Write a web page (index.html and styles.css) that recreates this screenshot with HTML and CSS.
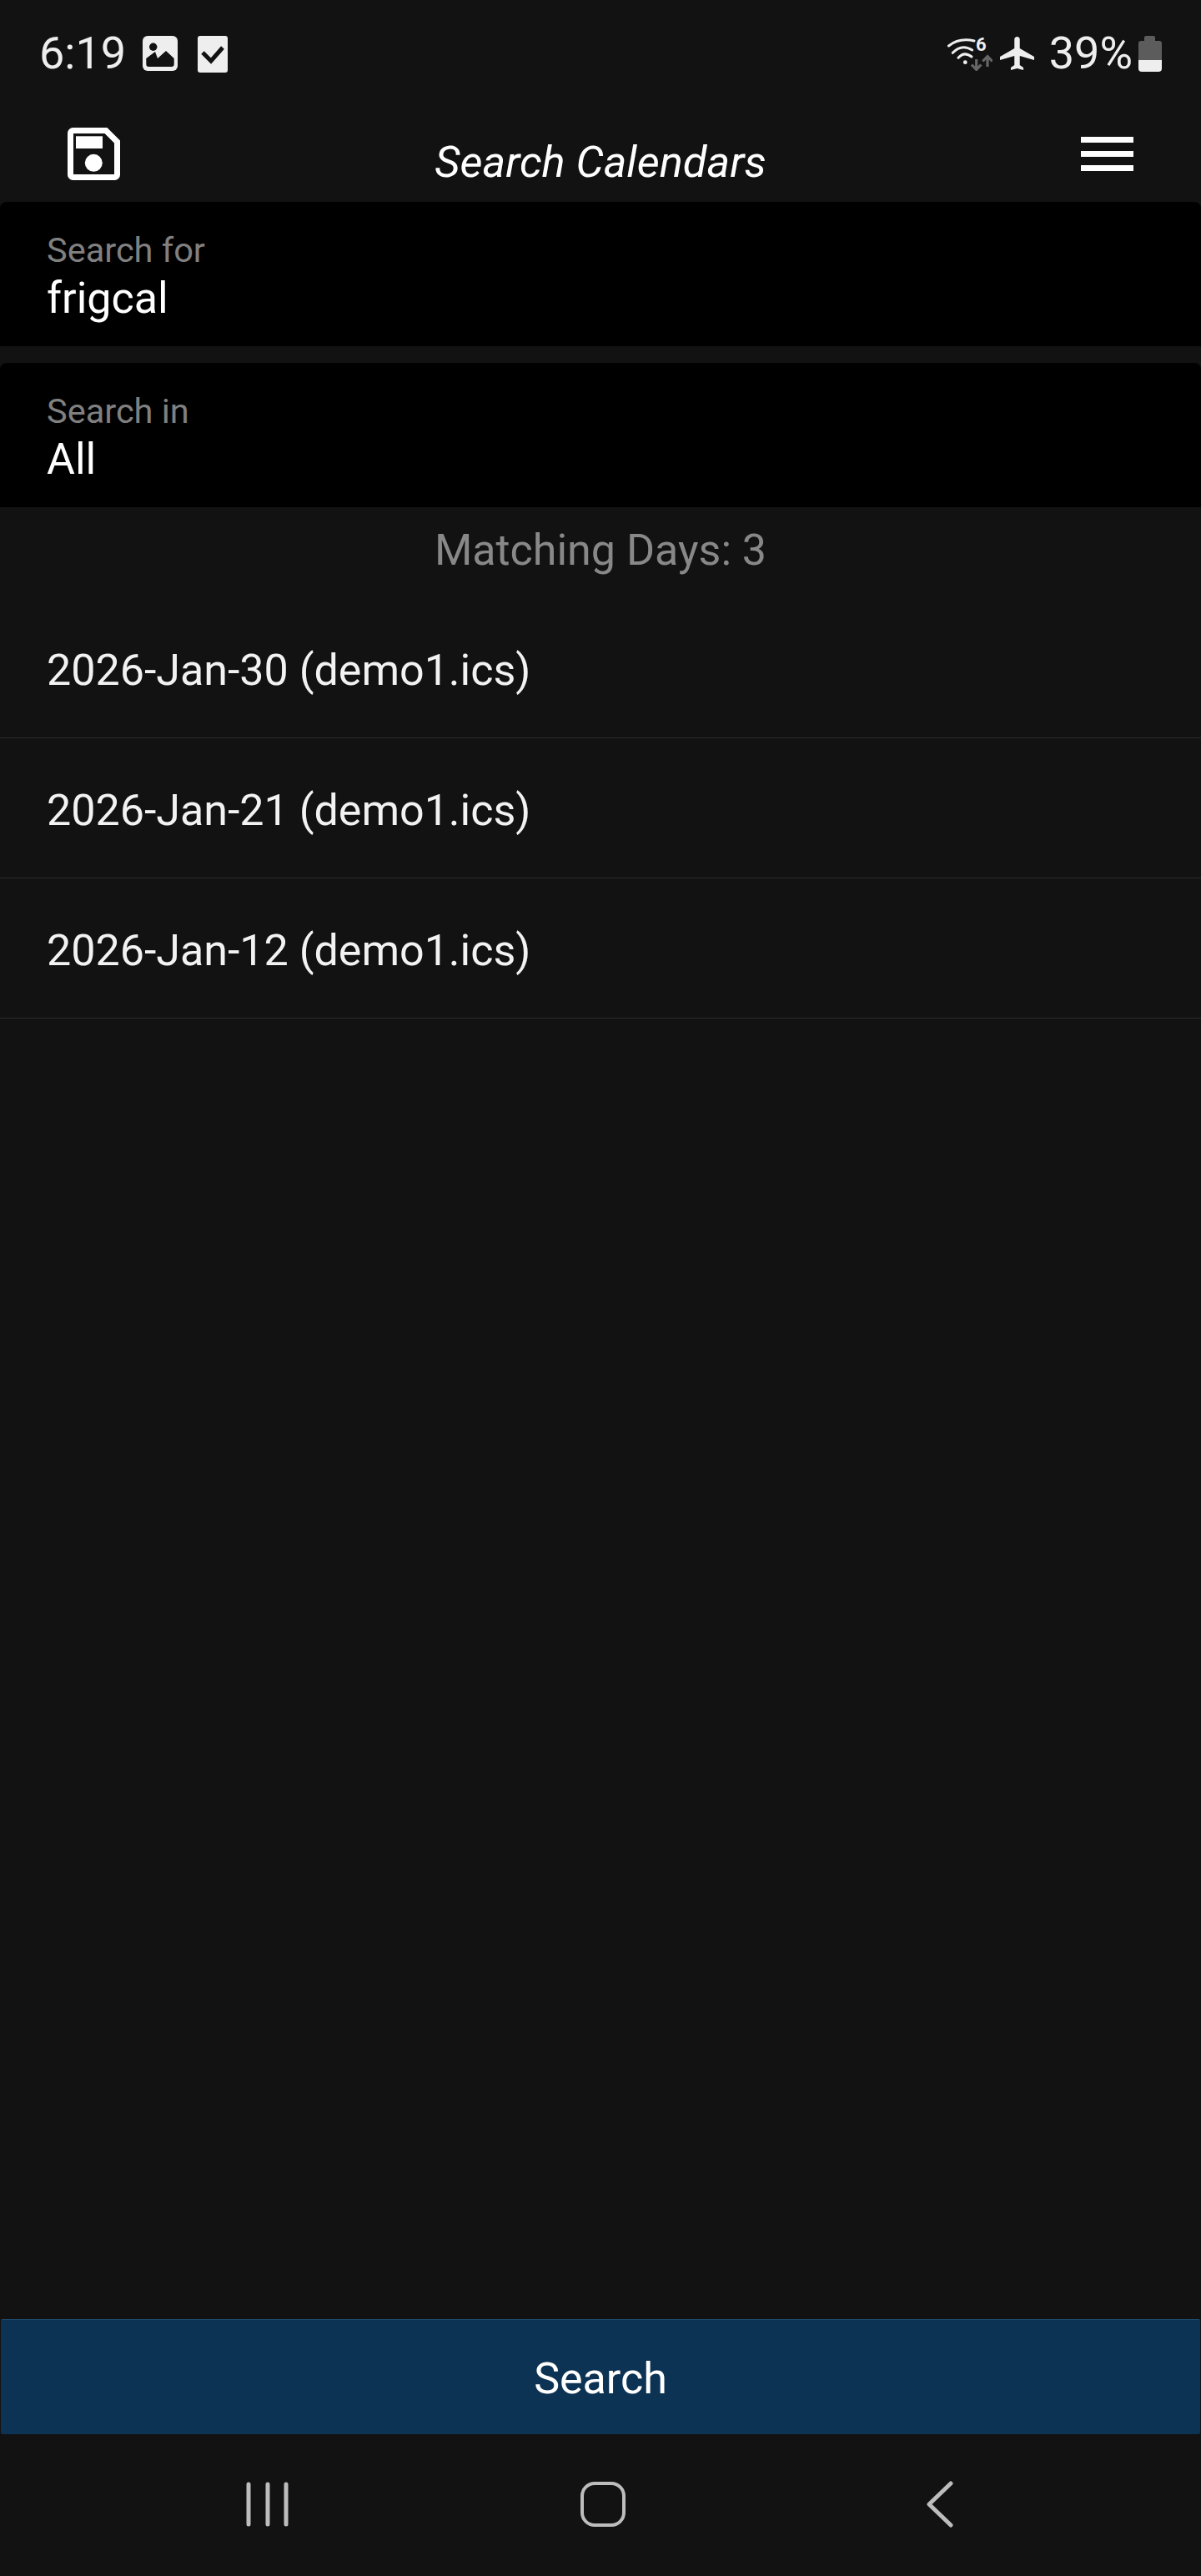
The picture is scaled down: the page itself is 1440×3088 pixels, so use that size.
FILE: index.html
```html
<!DOCTYPE html>
<html lang="en">
<head>
    <meta charset="UTF-8">
    <meta name="viewport" content="width=device-width, initial-scale=1.0">
    <title>Search Calendars</title>
    <link rel="stylesheet" href="styles.css">
</head>
<body>
    <div class="status-bar">
        <div class="status-left">
            <span class="status-time">6:19</span>
            <svg class="icon-gallery" width="42" height="42" viewBox="0 0 42 42">
                <rect width="42" height="42" rx="6" fill="#eee"/>
                <circle cx="12.7" cy="13.3" r="4.7" fill="#121212"/>
                <path d="M4.3 27 15 19l3 8 10-9 9.7 9v7a3 3 0 0 1-3 3H7.3a3 3 0 0 1-3-3z" fill="#121212"/>
            </svg>
            <svg class="icon-task" width="36" height="44" viewBox="0 0 36 44">
                <rect width="36" height="44" rx="3" fill="#eee"/>
                <path d="M6 20l10 10 14-16" fill="none" stroke="#121212" stroke-width="5"/>
            </svg>
        </div>
        <div class="status-right">
            <svg class="icon-wifi" width="54" height="46" viewBox="0 -5 54 46">
                <g fill="none" stroke="#eee" stroke-width="3" stroke-linecap="round">
                    <path d="M1.5 11Q14 1 32 5"/>
                    <path d="M6.3 19.3Q17 8 29.7 16"/>
                    <path d="M13 25.3Q20 17 29 24"/>
                </g>
                <circle cx="21.3" cy="30.7" r="2.4" fill="#eee"/>
                <text class="wifi-six" x="34" y="17">6</text>
                <g fill="none" stroke="#666" stroke-width="3.2">
                    <path d="M34.7 27v12M29 33.5l5.7 6 5.7-6"/>
                    <path d="M48 36V24M42.3 29.5l5.7-6 5.7 6"/>
                </g>
            </svg>
            <svg class="icon-plane" width="41" height="40" viewBox="2 2 19 20" preserveAspectRatio="none">
                <path d="M21 16v-2l-8-5V3.5c0-.83-.67-1.5-1.5-1.5S10 2.67 10 3.5V9l-8 5v2l8-2.5V19l-2 1.5V22l3.5-1 3.5 1v-1.5L13 19v-5.5l8 2.5z" fill="#eee"/>
            </svg>
            <span class="status-battery">39%</span>
            <svg class="icon-battery" width="28" height="43" viewBox="0 0 28 43">
                <path d="M7 6V2a2 2 0 0 1 2-2h9a2 2 0 0 1 2 2v4h5a3 3 0 0 1 3 3v20H0V9a3 3 0 0 1 3-3z" fill="#5c5c5c"/>
                <path d="M0 29h28v10a4 4 0 0 1-4 4H4a4 4 0 0 1-4-4z" fill="#eee"/>
            </svg>
        </div>
    </div>

    <header class="app-bar">
        <svg class="icon-save" width="63" height="63" viewBox="0 0 63 63">
            <path d="M6.5 3.500H46L59.500 17V56.500a3 3 0 0 1-3 3H6.500a3 3 0 0 1-3-3V6.500a3 3 0 0 1 3-3z" fill="none" stroke="#fff" stroke-width="7"/>
            <rect x="10" y="10.300" width="32" height="14.700" fill="#fff"/>
            <circle cx="31.300" cy="42.300" r="10.500" fill="#fff"/>
        </svg>
        <h1 class="app-title">Search Calendars</h1>
        <div class="menu-btn">
            <span class="menu-line"></span>
            <span class="menu-line"></span>
            <span class="menu-line"></span>
        </div>
    </header>

    <div class="field">
        <div class="field-label">Search for</div>
        <div class="field-value">frigcal</div>
    </div>
    <div class="field field-second">
        <div class="field-label">Search in</div>
        <div class="field-value">All</div>
    </div>

    <div class="match-count">Matching Days: 3</div>

    <ul class="result-list">
        <li class="result-row">2026-Jan-30 (demo1.ics)</li>
        <li class="result-row">2026-Jan-21 (demo1.ics)</li>
        <li class="result-row">2026-Jan-12 (demo1.ics)</li>
    </ul>

    <button class="search-btn" type="button">Search</button>

    <nav class="nav-bar">
        <svg width="52" height="54" viewBox="0 0 52 54">
            <g stroke="#bdbdbd" stroke-width="5" stroke-linecap="round">
                <path d="M3 3v48M26 3v48M48 3v48"/>
            </g>
        </svg>
        <svg width="54" height="54" viewBox="0 0 54 54">
            <rect x="2" y="2" width="50" height="50" rx="15" fill="none" stroke="#bdbdbd" stroke-width="4"/>
        </svg>
        <svg class="icon-back" width="32" height="56" viewBox="0 0 32 56">
            <path d="M29 3 3 28l26 25" fill="none" stroke="#bdbdbd" stroke-width="5" stroke-linecap="round" stroke-linejoin="round"/>
        </svg>
    </nav>
</body>
</html>
```

FILE: styles.css
```css
html, body {
    margin: 0;
    padding: 0;
}
body {
    display: flex;
    flex-direction: column;
    height: 3088px;
    overflow: hidden;
    background-color: #121212;
    color: #fff;
    font-family: Roboto, "Liberation Sans", sans-serif;
}
svg {
    display: block;
    flex: none;
}
.status-bar {
    display: flex;
    justify-content: space-between;
    align-items: flex-start;
    height: 87px;
    padding: 43px 47px 0 47px;
    color: #eee;
}
.status-left,
.status-right {
    display: flex;
    align-items: flex-start;
}
.status-time {
    font-size: 54px;
    font-weight: 400;
    line-height: 42px;
    margin-right: 20px;
}
.icon-task {
    margin-left: 24px;
}
.icon-wifi {
    margin-top: -4px;
}
.wifi-six {
    font-size: 22px;
    font-weight: 700;
    fill: #eee;
}
.icon-plane {
    margin: 1px 0 0 9px;
}
.status-battery {
    font-size: 54px;
    font-weight: 400;
    line-height: 42px;
    margin: 0 7px 0 18px;
}
.app-bar {
    display: flex;
    justify-content: space-between;
    align-items: center;
    height: 109px;
    padding: 0 81px 3px;
}
.app-title {
    margin: 0;
    padding-top: 19px;
    font-size: 52.500px;
    font-weight: 400;
    font-style: italic;
}
.menu-btn {
    display: flex;
    flex-direction: column;
    gap: 10px;
    width: 63px;
}
.menu-line {
    height: 7px;
    background-color: #fff;
}
.field {
    height: 173px;
    padding: 31px 56px 0;
    box-sizing: border-box;
    background-color: #000;
    border-radius: 8px 8px 0 0;
}
.field-second {
    margin-top: 20px;
}
.field-label {
    font-size: 41.500px;
    line-height: 54px;
    color: #808080;
}
.field-value {
    font-size: 52px;
    line-height: 62px;
}
.match-count {
    height: 109px;
    line-height: 104px;
    text-align: center;
    font-size: 52px;
    color: #888;
}
.result-list {
    flex: 1;
    margin: 0;
    padding: 0;
    list-style: none;
}
.result-row {
    height: 167px;
    line-height: 174px;
    padding-left: 56px;
    font-size: 52px;
    color: #f2f2f2;
    border-bottom: 1px solid #2a2a2a;
}
.search-btn {
    display: block;
    height: 138px;
    margin: 0 1px;
    padding: 3px 0 0;
    border: none;
    border-top: 1px solid #1d4a6b;
    border-radius: 2px;
    background-color: #0d3354;
    color: #fff;
    font-family: inherit;
    font-size: 52px;
}
.nav-bar {
    display: grid;
    grid-template-columns: repeat(3, 402px);
    justify-items: center;
    align-items: center;
    height: 170px;
    padding: 0 0 58px 120px;
    box-sizing: border-box;
    align-content: end;
}
.icon-back {
    margin-left: 4px;
}
```
